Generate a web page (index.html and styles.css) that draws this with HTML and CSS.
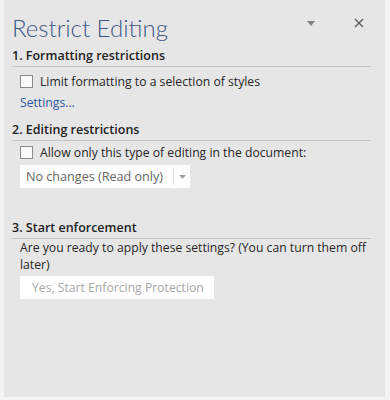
FILE: index.html
```html
<!DOCTYPE html>
<html lang="en">
<head>
  <meta charset="UTF-8" />
  <title>Restrict Editing</title>
  <link rel="stylesheet" href="styles.css">
</head>
<body>
  <div class="pane">
    <header class="pane-head">
      <h1>Restrict Editing</h1>
      <div class="pane-tools">
        <span class="tool menu">
          <svg width="8" height="5" viewBox="0 0 8 5"><path d="M0 0h8L4 5z" fill="#808080"/></svg>
        </span>
        <span class="tool close">
          <svg width="10" height="10" viewBox="0 0 10 10"><path d="M1 1l8 8M9 1l-8 8" stroke="#5a5a5a" stroke-width="1.3"/></svg>
        </span>
      </div>
    </header>

    <!-- 1 -->
    <section class="group">
      <h2>1. Formatting restrictions</h2>
      <label class="check"><span class="box"></span>Limit formatting to a selection of styles</label>
      <a class="link" href="#">Settings...</a>
    </section>

    <!-- 2 -->
    <section class="group">
      <h2>2. Editing restrictions</h2>
      <label class="check tight"><span class="box"></span>Allow only this type of editing in the document:</label>
      <div class="select">
        <span class="select-text">No changes (Read only)</span>
        <span class="select-arrow">
          <svg width="7" height="4" viewBox="0 0 7 4"><path d="M0 0h7L3.5 4z" fill="#a0a0a0"/></svg>
        </span>
      </div>
    </section>

    <!-- 3 -->
    <section class="group last">
      <h2>3. Start enforcement</h2>
      <p class="note">Are you ready to apply these settings? (You can turn them off later)</p>
      <button class="btn" disabled>Yes, Start Enforcing Protection</button>
    </section>
  </div>
</body>
</html>
```

FILE: styles.css
```css
:root {
  --pane-bg: #e6e6e6;
  --text: #262626;
  --link: #2b579a;
  --rule: #c4c4c4;
}
* { box-sizing: border-box; margin: 0; padding: 0; }
body {
  background: #f4f4f4;
  padding: 0 5px 0 4px;
  font-family: 'Open Sans', 'Liberation Sans', sans-serif;
  color: var(--text);
}
.pane {
  background: var(--pane-bg);
  height: 397px;
  padding: 10px 8px 0 8px;
}
.pane-head {
  display: flex;
  align-items: center;
  justify-content: space-between;
  height: 36px;
}
.pane-head h1 {
  font-family: 'Lato', 'Open Sans', sans-serif;
  font-weight: 300;
  font-size: 24px;
  line-height: 30px;
  color: #3d5887;
}
.pane-tools {
  display: flex;
  align-items: center;
  gap: 39px;
  padding-right: 13px;
  margin-top: -10px;
}
.tool { display: flex; align-items: center; }
.group h2 {
  font-size: 12.5px;
  font-weight: 600;
  line-height: 20px;
  color: #222;
  border-bottom: 1px solid var(--rule);
  margin-right: 6px;
}
.check {
  display: flex;
  align-items: center;
  font-size: 12.2px;
  height: 16px;
  margin: 6px 0 0 8px;
}
.check.tight { margin-top: 3px; }
.box {
  width: 13px;
  height: 13px;
  border: 1px solid #8a8a8a;
  background: #fafafa;
  margin-right: 7px;
}
.link {
  display: block;
  margin: 6px 0 0 8px;
  font-size: 12.2px;
  line-height: 16px;
  color: var(--link);
  text-decoration: none;
}
.group + .group { margin-top: 9px; }
.select {
  display: flex;
  align-items: center;
  width: 170px;
  height: 23px;
  margin: 5px 0 0 8px;
  background: #fff;
  font-size: 12.6px;
  color: #666;
}
.select-text {
  flex: 1;
  padding-left: 6px;
  border-right: 1px solid #dcdcdc;
  line-height: 17px;
}
.select-arrow {
  width: 16px;
  display: flex;
  justify-content: center;
}
.group.last { margin-top: 30px; }
.note {
  font-size: 12.2px;
  line-height: 17px;
  margin-left: 8px;
}
.btn {
  display: block;
  margin: 3px 0 0 8px;
  width: 194px;
  height: 23px;
  border: none;
  background: #fff;
  font-family: inherit;
  font-size: 12.2px;
  color: #a8a8a8;
  text-align: left;
  padding-left: 12px;
}
```
